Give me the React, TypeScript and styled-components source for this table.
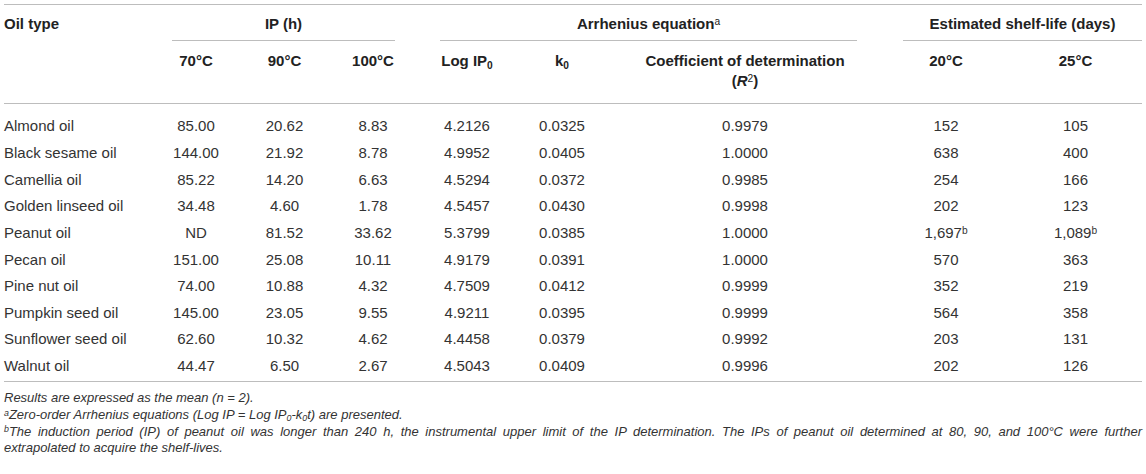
import React from "react";
import styled, { createGlobalStyle } from "styled-components";

const GlobalStyle = createGlobalStyle`
  html, body { margin: 0; padding: 0; background: #ffffff; }
  body { font-family: "Liberation Sans", Arial, Helvetica, sans-serif; color: #333333; }
`;

const COLS = "148px 88px 89px 88px 100px 90px 276px 126px 133px";
const LINE = "#bdbdbd";

const Page = styled.div`
  width: 1138px;
  padding: 4px 4px 0 4px;
`;

const Table = styled.div`
  border-top: 1px solid ${LINE};
  border-bottom: 1px solid ${LINE};
`;

const Head = styled.div`
  display: grid;
  grid-template-columns: ${COLS};
  grid-template-rows: auto auto;
  border-bottom: 1px solid ${LINE};
  font-weight: bold;
  font-size: 15px;
  color: #222222;
`;

const HeadLabel = styled.div`
  grid-column: 1;
  grid-row: 1;
  padding-top: 10px;
  line-height: 17px;
  text-align: left;
`;

const GroupCell = styled.div<{ $start: number; $span: number; $l: number; $r: number }>`
  grid-row: 1;
  grid-column: ${(p) => p.$start} / span ${(p) => p.$span};
  padding: 10px ${(p) => p.$r}px 0 ${(p) => p.$l}px;
`;

const GroupTitle = styled.div`
  line-height: 17px;
  padding-bottom: 8px;
  border-bottom: 1px solid ${LINE};
  text-align: center;
`;

const SubHead = styled.div<{ $col: number }>`
  grid-row: 2;
  grid-column: ${(p) => p.$col};
  padding: 10px 0 12px;
  line-height: 20px;
  text-align: center;
`;

const Body = styled.div`
  padding: 9px 0 2px;
  font-size: 15px;
`;

const Row = styled.div`
  display: grid;
  grid-template-columns: ${COLS};
  height: 26.65px;
  align-items: center;
  line-height: 20px;
`;

const Cell = styled.div<{ $left?: boolean }>`
  text-align: ${(p) => (p.$left ? "left" : "center")};
  white-space: nowrap;
`;

const Sup = styled.sup`
  font-size: 0.68em;
  line-height: 0;
  vertical-align: 0;
  position: relative;
  top: -0.4em;
  font-weight: normal;
`;

const Sub = styled.sub`
  font-size: 0.68em;
  line-height: 0;
  vertical-align: 0;
  position: relative;
  top: 0.25em;
`;

const Notes = styled.div`
  margin-top: 8px;
  font-size: 13px;
  line-height: 16.67px;
  font-style: italic;
  color: #333333;
`;

const Note = styled.p`
  margin: 0;
`;

const FullLine = styled.span`
  display: block;
  text-align: justify;
  text-align-last: justify;
  white-space: normal;
`;

type RowData = [string, string, string, string, string, string, string, string, string];

const rows: RowData[] = [
  ["Almond oil", "85.00", "20.62", "8.83", "4.2126", "0.0325", "0.9979", "152", "105"],
  ["Black sesame oil", "144.00", "21.92", "8.78", "4.9952", "0.0405", "1.0000", "638", "400"],
  ["Camellia oil", "85.22", "14.20", "6.63", "4.5294", "0.0372", "0.9985", "254", "166"],
  ["Golden linseed oil", "34.48", "4.60", "1.78", "4.5457", "0.0430", "0.9998", "202", "123"],
  ["Peanut oil", "ND", "81.52", "33.62", "5.3799", "0.0385", "1.0000", "1,697^b", "1,089^b"],
  ["Pecan oil", "151.00", "25.08", "10.11", "4.9179", "0.0391", "1.0000", "570", "363"],
  ["Pine nut oil", "74.00", "10.88", "4.32", "4.7509", "0.0412", "0.9999", "352", "219"],
  ["Pumpkin seed oil", "145.00", "23.05", "9.55", "4.9211", "0.0395", "0.9999", "564", "358"],
  ["Sunflower seed oil", "62.60", "10.32", "4.62", "4.4458", "0.0379", "0.9992", "203", "131"],
  ["Walnut oil", "44.47", "6.50", "2.67", "4.5043", "0.0409", "0.9996", "202", "126"],
];

function renderValue(v: string) {
  const i = v.indexOf("^");
  if (i < 0) return v;
  return (
    <>
      {v.slice(0, i)}
      <Sup>{v.slice(i + 1)}</Sup>
    </>
  );
}

export default function App() {
  return (
    <Page>
      <GlobalStyle />
      <Table>
        <Head>
          <HeadLabel>Oil type</HeadLabel>
          <GroupCell $start={2} $span={3} $l={20} $r={22}>
            <GroupTitle>IP (h)</GroupTitle>
          </GroupCell>
          <GroupCell $start={5} $span={3} $l={23} $r={26}>
            <GroupTitle>
              Arrhenius equation<Sup>a</Sup>
            </GroupTitle>
          </GroupCell>
          <GroupCell $start={8} $span={2} $l={20} $r={0}>
            <GroupTitle>Estimated shelf-life (days)</GroupTitle>
          </GroupCell>
          <SubHead $col={2}>70°C</SubHead>
          <SubHead $col={3}>90°C</SubHead>
          <SubHead $col={4}>100°C</SubHead>
          <SubHead $col={5}>
            Log IP<Sub>0</Sub>
          </SubHead>
          <SubHead $col={6}>
            k<Sub>0</Sub>
          </SubHead>
          <SubHead $col={7}>
            Coefficient of determination
            <br />(<i>R</i>
            <Sup>2</Sup>)
          </SubHead>
          <SubHead $col={8}>20°C</SubHead>
          <SubHead $col={9}>25°C</SubHead>
        </Head>
        <Body>
          {rows.map((r) => (
            <Row key={r[0]}>
              {r.map((v, i) => (
                <Cell key={i} $left={i === 0}>
                  {renderValue(v)}
                </Cell>
              ))}
            </Row>
          ))}
        </Body>
      </Table>
      <Notes>
        <Note>Results are expressed as the mean (n = 2).</Note>
        <Note>
          <Sup>a</Sup>Zero-order Arrhenius equations (Log IP = Log IP<Sub>0</Sub>-k<Sub>0</Sub>t) are presented.
        </Note>
        <Note>
          <FullLine>
            <Sup>b</Sup>The induction period (IP) of peanut oil was longer than 240 h, the instrumental upper limit of the
            IP determination. The IPs of peanut oil determined at 80, 90, and 100°C were further
          </FullLine>
          extrapolated to acquire the shelf-lives.
        </Note>
      </Notes>
    </Page>
  );
}
